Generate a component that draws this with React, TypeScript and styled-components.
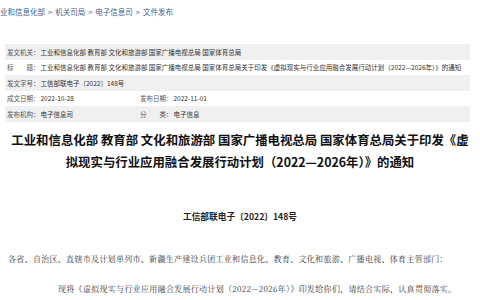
import { createGlobalStyle, styled } from "styled-components";

const GlobalStyle = createGlobalStyle`
  html, body {
    margin: 0;
    padding: 0;
    background: #ffffff;
    overflow: hidden;
  }
  body {
    font-family: "Noto Sans CJK SC", "Noto Sans", sans-serif;
  }
`;

interface IMetaRow {
  cells: { label: string; value: string }[];
}

const metaRows: IMetaRow[] = [
  {
    cells: [
      {
        label: "发文机关：",
        value: "工业和信息化部 教育部 文化和旅游部 国家广播电视总局 国家体育总局",
      },
    ],
  },
  {
    cells: [
      {
        label: "标　　题：",
        value:
          "工业和信息化部 教育部 文化和旅游部 国家广播电视总局 国家体育总局关于印发《虚拟现实与行业应用融合发展行动计划（2022—2026年）》的通知",
      },
    ],
  },
  { cells: [{ label: "发文字号：", value: "工信部联电子〔2022〕148号" }] },
  {
    cells: [
      { label: "成文日期：", value: "2022-10-28" },
      { label: "发布日期：", value: "2022-11-01" },
    ],
  },
  {
    cells: [
      { label: "发布机构：", value: "电子信息司" },
      { label: "分　　类：", value: "电子信息" },
    ],
  },
];

const crumbs = ["工业和信息化部", "机关司局", "电子信息司", "文件发布"];

export default function App() {
  return (
    <Page>
      <GlobalStyle />
      <Breadcrumb>
        {crumbs.map((c, i) => (
          <span key={c}>
            {i > 0 && <Sep>&gt;</Sep>}
            <Crumb>{c}</Crumb>
          </span>
        ))}
      </Breadcrumb>

      <MetaTable>
        {metaRows.map((row, i) => (
          <MetaRow key={i} striped={i % 2 === 0}>
            {row.cells.map((cell) => (
              <MetaCell key={cell.label}>
                <MetaLabel>{cell.label}</MetaLabel>
                <MetaValue>{cell.value}</MetaValue>
              </MetaCell>
            ))}
          </MetaRow>
        ))}
      </MetaTable>

      <Title>
        工业和信息化部 教育部 文化和旅游部 国家广播电视总局 国家体育总局关于印发《虚拟现实与行业应用融合发展行动计划（2022—2026年）》的通知
      </Title>

      <DocNumber>工信部联电子〔2022〕148号</DocNumber>

      <Body>
        <Para>
          各省、自治区、直辖市及计划单列市、新疆生产建设兵团工业和信息化、教育、文化和旅游、广播电视、体育主管部门：
        </Para>
        <Para indent>
          现将《虚拟现实与行业应用融合发展行动计划（2022—2026年）》印发给你们，请结合实际，认真贯彻落实。
        </Para>
      </Body>
    </Page>
  );
}

const Page = styled.div`
  width: 480px;
  height: 300px;
  overflow: hidden;
`;

const Breadcrumb = styled.div`
  display: flex;
  align-items: center;
  height: 22px;
  margin-left: -7.5px;
  font-size: 7.5px;
  color: #3f5f8f;
  white-space: nowrap;
`;

const Crumb = styled.span``;

const Sep = styled.span`
  margin: 0 3px;
  color: #3f5f8f;
`;

const MetaTable = styled.div`
  margin: 22px 10px 0 5px;
  display: flex;
  flex-direction: column;
`;

const MetaRow = styled.div<{ striped: boolean }>`
  display: grid;
  grid-template-columns: 133px 1fr;
  align-items: center;
  height: 15.5px;
  padding-left: 2px;
  background: ${(p) => (p.striped ? "#f0f0f0" : "transparent")};
  font-size: 6.5px;
  white-space: nowrap;
`;

const MetaCell = styled.div`
  display: flex;
  align-items: center;
`;

const MetaLabel = styled.span`
  color: #555555;
  margin-right: 1px;
`;

const MetaValue = styled.span`
  color: #333333;
`;

const Title = styled.h1`
  margin: 7px 8px 0 8px;
  font-size: 12.4px;
  line-height: 22px;
  font-weight: 700;
  color: #111111;
  text-align: center;
`;

const DocNumber = styled.div`
  margin-top: 36px;
  text-align: center;
  font-size: 8.7px;
  line-height: 16px;
  font-weight: 700;
  color: #222222;
`;

const Body = styled.div`
  margin: 26px 30px 0 8px;
  font-family: "Noto Serif CJK SC", "Noto Sans CJK SC", serif;
`;

const Para = styled.p<{ indent?: boolean }>`
  margin: 0 0 14px;
  font-size: 8px;
  line-height: 16px;
  letter-spacing: 0.3px;
  color: #333333;
  white-space: nowrap;
  padding-left: ${(p) => (p.indent ? "50px" : "0")};
`;
